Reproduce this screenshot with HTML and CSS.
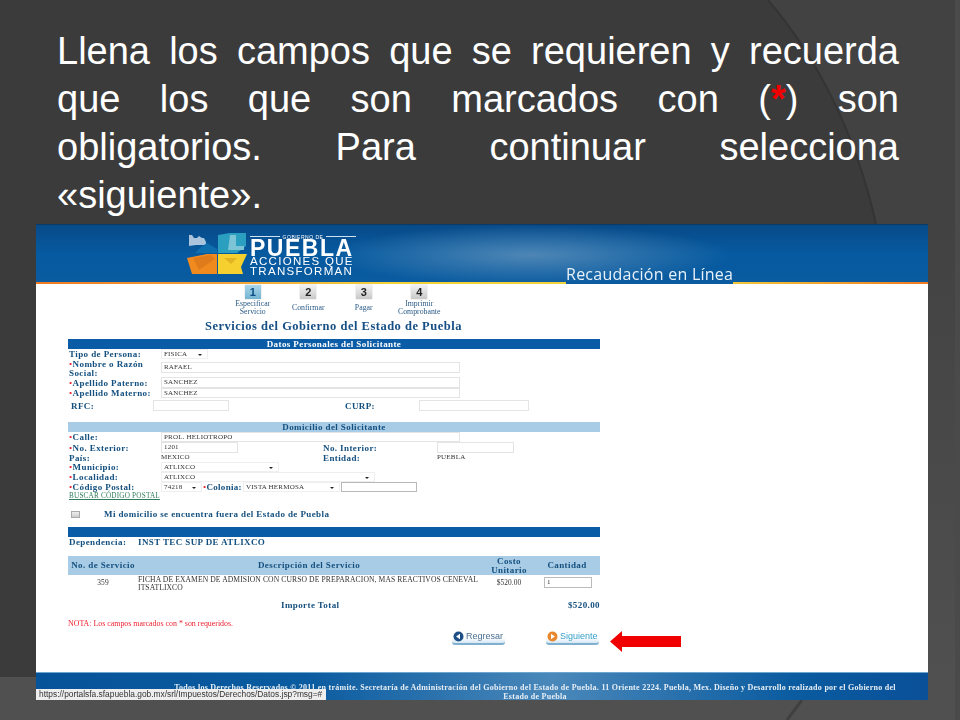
FILE: index.html
```html
<!DOCTYPE html>
<html lang="es">
<head>
<meta charset="utf-8">
<title>Servicios del Gobierno del Estado de Puebla</title>
<link rel="stylesheet" href="styles.css">
</head>
<body>
<div class="slide">
  <svg class="slide-bg" width="960" height="720" viewBox="0 0 960 720" aria-hidden="true">
    <defs>
      <linearGradient id="side" x1="0" y1="0" x2="0" y2="1">
        <stop offset="0" stop-color="#424242"/>
        <stop offset="1" stop-color="#505050"/>
      </linearGradient>
    </defs>
    <path d="M768 0C815 55 855 130 876 224L960 224V0Z" fill="#424242"/>
    <path d="M768 0C815 55 855 130 876 224" fill="none" stroke="#343434" stroke-width="2"/>
    <rect x="876" y="224" width="84" height="453" fill="url(#side)"/>
    <rect x="955" width="5" height="720" fill="#4a4a4a"/>
    <path d="M802 700L787 720" stroke="#404040" stroke-width="3" fill="none"/>
  </svg>
  <h1 class="title">
    <span class="line">Llena los campos que se requieren y recuerda</span>
    <span class="line">que los que son marcados con (<span class="star">*</span>) son</span>
    <span class="line">obligatorios. Para continuar selecciona</span>
    <span class="line line-last">«siguiente».</span>
  </h1>
  <div class="shot">
    <header class="banner">
      <div class="logo">
        <svg class="logo-mark" width="60" height="42" viewBox="0 0 60 42" aria-hidden="true">
          <path d="M2 2H5L7 5H10L12 3L15 5H17L19 9V12H9L2 13Z" fill="#a9c4dc"/>
          <path d="M0 25L20 21H30V41H5Z" fill="#f08a1e"/>
          <path d="M31 21H60L54 34L56 41H31Z" fill="#f6d02e"/>
          <path d="M6 25L24 22L28 26L12 37Z" fill="#d2701a" opacity=".55"/>
          <path d="M37 25H50L44 31Z" fill="#d9a820" opacity=".7"/>
          <path d="M20 10L30 16V20H8L14 14Z" fill="#0f6fae"/>
          <path d="M31 2L43 0H59V13L50 20H31Z" fill="#2a9fc0"/>
          <path d="M43 2H49V13H57V17H41Z" fill="#7cc4d6"/>
        </svg>
        <div class="logo-text">
          <div class="logo-top">GOBIERNO DE</div>
          <div class="logo-name">PUEBLA</div>
          <div class="logo-sub">ACCIONES QUE</div>
          <div class="logo-sub">TRANSFORMAN</div>
        </div>
      </div>
      <div class="banner-tag">Recaudación en Línea</div>
    </header>
    <div class="rule"></div>

    <div class="steps">
      <div class="step"><span class="num num-on">1</span><span class="step-label">Especificar<br>Servicio</span></div>
      <div class="step"><span class="num">2</span><span class="step-label step-mid">Confirmar</span></div>
      <div class="step"><span class="num">3</span><span class="step-label step-mid">Pagar</span></div>
      <div class="step"><span class="num">4</span><span class="step-label">Imprimir<br>Comprobante</span></div>
    </div>

    <h2 class="page-title">Servicios del Gobierno del Estado de Puebla</h2>

    <main class="form">
      <div class="bar bar-dark">Datos Personales del Solicitante</div>
      <div class="row h10"><label class="lab"><b>Tipo de Persona:</b></label><span class="sel w47">FISICA</span></div>
      <div class="row h17 mt1"><label class="lab lab-two"><i>•</i><b>Nombre o Razón Social:</b></label><span class="inp w299 inp-top">RAFAEL</span></div>
      <div class="row h11"><label class="lab"><i>•</i><b>Apellido Paterno:</b></label><span class="inp w299">SANCHEZ</span></div>
      <div class="row h10"><label class="lab"><i>•</i><b>Apellido Materno:</b></label><span class="inp w299">SANCHEZ</span></div>
      <div class="row h11 mt2">
        <label class="lab-rfc"><b>RFC:</b></label><span class="inp w76"></span>
        <label class="lab-curp"><b>CURP:</b></label><span class="inp w110"></span>
      </div>
      <div class="bar bar-light mt11">Domicilio del Solicitante</div>
      <div class="row h10"><label class="lab"><i>•</i><b>Calle:</b></label><span class="inp w299">PROL. HELIOTROPO</span></div>
      <div class="row h11">
        <label class="lab"><i>•</i><b>No. Exterior:</b></label><span class="inp w77">1201</span>
        <label class="lab-mid"><b>No. Interior:</b></label><span class="inp w77"></span>
      </div>
      <div class="row h9">
        <label class="lab"><b>País:</b></label><span class="plain w162">MEXICO</span>
        <label class="lab-mid lab-mid-b"><b>Entidad:</b></label><span class="plain">PUEBLA</span>
      </div>
      <div class="row h10"><label class="lab"><i>•</i><b>Municipio:</b></label><span class="sel w118">ATLIXCO</span></div>
      <div class="row h10"><label class="lab"><i>•</i><b>Localidad:</b></label><span class="sel w214">ATLIXCO</span></div>
      <div class="row h10">
        <label class="lab"><i>•</i><b>Código Postal:</b></label><span class="sel w41">74218</span>
        <label class="lab-col"><i>•</i><b>Colonia:</b></label><span class="sel w97">VISTA HERMOSA</span><span class="inp w76 dark"></span>
      </div>
      <a class="search" href="#">BUSCAR CÓDIGO POSTAL</a>
      <div class="outside"><span class="check"></span><b>Mi domicilio se encuentra fuera del Estado de Puebla</b></div>
      <div class="bar bar-dark bar-blank"></div>
      <div class="dep"><b class="dep-l">Dependencia:</b><b>INST TEC SUP DE ATLIXCO</b></div>
      <table class="services">
        <thead>
          <tr><th class="c1">No. de Servicio</th><th class="c2">Descripción del Servicio</th><th class="c3">Costo<br>Unitario</th><th class="c4">Cantidad</th></tr>
        </thead>
        <tbody>
          <tr>
            <td class="c1 num-cell">359</td>
            <td class="c2 desc">FICHA DE EXAMEN DE ADMISION CON CURSO DE PREPARACION, MAS REACTIVOS CENEVAL ITSATLIXCO</td>
            <td class="c3 cost">$520.00</td>
            <td class="c4 qty"><span class="inp-qty">1</span></td>
          </tr>
        </tbody>
      </table>
      <div class="total"><b>Importe Total</b><b>$520.00</b></div>
      <p class="note">NOTA: Los campos marcados con * son requeridos.</p>
      <div class="actions">
        <span class="btn btn-back">
          <svg width="11" height="11" viewBox="0 0 11 11" aria-hidden="true"><circle cx="5.5" cy="5.5" r="5" fill="#1d4f86"/><path d="M7 2.8V8.2L3 5.5Z" fill="#fff"/></svg>Regresar</span>
        <span class="btn btn-next">
          <svg width="11" height="11" viewBox="0 0 11 11" aria-hidden="true"><circle cx="5.5" cy="5.5" r="5" fill="#e8862a"/><path d="M4 2.8V8.2L8 5.5Z" fill="#fff"/></svg>Siguiente</span>
      </div>
    </main>

    <footer class="foot">
      <p>Todos los Derechos Reservados © 2011 en trámite. Secretaría de Administración del Gobierno del Estado de Puebla. 11 Oriente 2224. Puebla, Mex. Diseño y Desarrollo realizado por el Gobierno del Estado de Puebla</p>
    </footer>
    <div class="status">https://portalsfa.sfapuebla.gob.mx/srl/Impuestos/Derechos/Datos.jsp?msg=#</div>
    <svg class="arrow" width="72" height="21" viewBox="0 0 72 21" aria-hidden="true"><path d="M0 10.5L12 0V5H71V16H12V21Z" fill="#f00000"/></svg>
  </div>
</div>
</body>
</html>
```
FILE: styles.css
```css
* { box-sizing: border-box; }
html, body { margin: 0; padding: 0; }
body { width: 960px; height: 720px; overflow: hidden; background: #3b3b3b; }

.slide {
  position: relative;
  width: 960px;
  height: 720px;
  overflow: hidden;
  background: linear-gradient(#3b3b3b 0, #3b3b3b 677px, #505050 677px, #505050 720px);
  font-family: "Liberation Sans", Arial, sans-serif;
}
.slide-bg { position: absolute; left: 0; top: 0; }

.title {
  position: relative;
  margin: 0;
  height: 224px;
  padding: 27px 61px 0 57px;
  color: #fff;
  font-weight: 400;
  font-size: 38px;
  line-height: 48px;
}
.line { display: block; text-align: justify; text-align-last: justify; }
.line-last { text-align-last: left; }
.star { color: #f00000; font-weight: 700; }

.shot {
  position: relative;
  width: 892px;
  height: 476px;
  margin-left: 36px;
  background: #fff;
  font-family: "Liberation Serif", "Times New Roman", serif;
  overflow: hidden;
  filter: blur(.3px);
}

.banner {
  position: relative;
  height: 58px;
  display: flex;
  align-items: flex-start;
  padding: 8px 0 0 151px;
  background:
    radial-gradient(ellipse 200px 30px at 494px 30px, #4e86b5 0, rgba(78,134,181,0) 100%),
    linear-gradient(#084a88, #065aa0 50%, #0a5ba0);
  border-top: 1px solid #0b3a68;
}
.logo { display: flex; gap: 3px; color: #fff; font-family: "Liberation Sans", Arial, sans-serif; }
.logo-text { width: 106px; }
.logo-top {
  display: flex;
  align-items: center;
  gap: 3px;
  height: 7px;
  font-size: 5px;
  line-height: 6px;
  letter-spacing: .5px;
  white-space: nowrap;
}
.logo-top::before, .logo-top::after { content: ""; flex: 1; height: 1px; background: #cfe0ee; }
.logo-name { font-size: 23px; line-height: 17px; font-weight: 700; letter-spacing: 1.5px; }
.logo-sub { font-size: 11.5px; line-height: 9.5px; letter-spacing: 1.3px; white-space: nowrap; }
.banner-tag {
  position: absolute;
  left: 530px;
  top: 40px;
  height: 19px;
  border-bottom: 2px solid #0a5ba0;
  color: #e8f1f8;
  font-family: "Open Sans", "Liberation Sans", sans-serif;
  font-size: 16px;
  line-height: 19px;
  letter-spacing: .25px;
  white-space: nowrap;
}
.rule {
  height: 2px;
  background: linear-gradient(90deg, #ee7a22 0, #f0a23a 22%, #f2d23a 40%, #f2d23a 75%, #ee7a22 100%);
}

.steps { display: flex; padding-left: 189px; height: 32px; }
.step { width: 55.5px; display: flex; flex-direction: column; align-items: center; }
.num {
  width: 16px;
  height: 14px;
  margin-top: 1px;
  background: linear-gradient(#f2f2f2, #c9c9c9);
  box-shadow: 0 0 1px #aaa;
  color: #222;
  font: 700 11px/14px "Liberation Sans", sans-serif;
  text-align: center;
}
.num-on { background: linear-gradient(#a9d5e8, #73b4d2); color: #0d4d85; }
.step-label {
  margin-top: 1px;
  color: #2a5a86;
  font-size: 7.8px;
  line-height: 8px;
  text-align: center;
  white-space: nowrap;
}
.step-mid { margin-top: 5px; }

.page-title {
  margin: 3px 0 0;
  padding-left: 169px;
  height: 15px;
  color: #164f85;
  font-size: 12.5px;
  line-height: 15px;
  font-weight: 700;
  letter-spacing: .5px;
  white-space: nowrap;
}

.form { width: 532px; margin-left: 32px; margin-top: 5px; color: #14507f; font-size: 9px; }
.bar {
  height: 10px;
  font-size: 9px;
  line-height: 10px;
  font-weight: 700;
  text-align: center;
  letter-spacing: .4px;
}
.bar-dark { background: #0a5ca6; color: #fff; }
.bar-light { background: #a9cce6; color: #14507f; }
.bar-blank { margin-top: 8px; }

.row { display: flex; align-items: center; white-space: nowrap; }
.h9 { height: 9px; }
.h10 { height: 10px; }
.h11 { height: 11px; }
.h17 { height: 17px; }
.mt1 { margin-top: 1px; }
.mt2 { margin-top: 2px; }
.mt11 { margin-top: 11px; }
.lab { width: 93px; padding-left: 1px; letter-spacing: .42px; flex: none; }
.lab i, .lab-col i { color: #e8202a; font-style: normal; }
.lab-two { white-space: normal; line-height: 9px; }
.lab-rfc { width: 85px; padding-left: 3px; letter-spacing: .4px; }
.lab-curp { width: 74px; margin-left: 116px; letter-spacing: .4px; }
.lab-mid { width: 114px; margin-left: 85px; letter-spacing: .4px; }
.lab-mid-b { margin-left: 0; }
.lab-col { width: 40px; margin-left: 1px; letter-spacing: .3px; }

.inp, .sel, .plain {
  color: #333;
  font-size: 7px;
  letter-spacing: .2px;
  height: 100%;
  flex: none;
}
.inp { border: 1px solid #e4e4e4; line-height: 9px; padding-left: 2px; background: #fff; }
.inp-top { align-self: flex-start; height: 11px; margin-top: 2px; }
.inp.dark { border-color: #b8b8b8; margin-left: 1px; }
.sel { position: relative; border: 1px solid #efefef; line-height: 8px; padding-left: 2px; background: #fff; }
.sel::after {
  content: "";
  position: absolute;
  right: 5px;
  top: 3.5px;
  border: 2.5px solid transparent;
  border-top: 2.5px solid #222;
  border-bottom: 0;
}
.plain { line-height: 9px; }
.w47 { width: 47px; }
.w299 { width: 299px; }
.w76 { width: 76px; }
.w77 { width: 77px; }
.w110 { width: 110px; }
.w118 { width: 118px; }
.w214 { width: 214px; }
.w41 { width: 41px; }
.w97 { width: 97px; }
.w162 { width: 162px; }

.search {
  display: block;
  height: 9px;
  padding-left: 1px;
  color: #2f7d5b;
  font-size: 7.2px;
  line-height: 9px;
  letter-spacing: .2px;
}
.outside {
  display: flex;
  align-items: center;
  height: 10px;
  margin-top: 8px;
  letter-spacing: .4px;
}
.check {
  width: 9px;
  height: 7px;
  margin: 0 24px 0 3px;
  border: 1px solid #aaa;
  background: linear-gradient(#eee, #ccc);
}
.outside b { font-weight: 700; }
.dep { display: flex; height: 10px; padding-left: 1px; line-height: 10px; letter-spacing: .4px; }
.dep-l { width: 69px; }

.services {
  width: 532px;
  margin-top: 9px;
  border-collapse: collapse;
  table-layout: fixed;
}
.services th {
  height: 19px;
  padding: 0;
  background: #a9cce6;
  font-size: 9px;
  line-height: 9px;
  letter-spacing: .4px;
  color: #14507f;
}
.services th.c4 { padding-right: 4px; }
.services td { padding: 0; color: #333; font-size: 7.4px; vertical-align: top; letter-spacing: .1px; }
.c1 { width: 70px; }
.c2 { width: 342px; }
.c3 { width: 58px; }
.c4 { width: 62px; }
.services .num-cell { text-align: center; padding-top: 3px; }
.services .desc { line-height: 7.5px; padding-top: 1px; font-size: 7.6px; }
.services .cost { text-align: center; padding-top: 3px; }
.services .qty { padding: 2px 0 0 6px; }
.inp-qty {
  display: block;
  width: 48px;
  height: 11px;
  border: 1px solid #bbb;
  padding-left: 2px;
  font-size: 7px;
  line-height: 9px;
}
.total {
  display: flex;
  justify-content: space-between;
  height: 10px;
  margin-top: 9px;
  padding-left: 213px;
  line-height: 10px;
  letter-spacing: .4px;
}
.note { margin: 9px 0 0; height: 9px; color: #ee2030; font-size: 7.9px; line-height: 9px; }
.actions { display: flex; padding-left: 384px; gap: 41px; margin-top: 2px; }
.btn {
  display: flex;
  align-items: center;
  gap: 2px;
  width: 53px;
  height: 15px;
  padding-left: 1px;
  border-bottom: 2px solid #7fb0d0;
  border-radius: 3px;
  background: linear-gradient(#fff 60%, #d5e6f2);
  font: 9px/11px "Liberation Sans", sans-serif;
}
.btn-back { color: #4a6f90; }
.btn-next { color: #37a0c8; }

.foot {
  position: absolute;
  left: 0;
  right: 0;
  bottom: 0;
  height: 28px;
  border-top: 1px solid #6fa6d0;
  padding: 11px 23px 0 129px;
  background: linear-gradient(90deg, #075399 0, #0a5ba0 30%, #4a88ba 58%, #0a5ba0 85%, #0a5099 100%);
}
.foot p {
  margin: 0;
  color: #e6eef5;
  font-size: 8px;
  font-weight: 700;
  line-height: 8.5px;
  text-align: center;
  letter-spacing: .27px;
}
.status {
  position: absolute;
  left: 0;
  bottom: 0;
  width: 290px;
  height: 11px;
  padding-left: 3px;
  background: #eeeeee;
  color: #333;
  font: 8.4px/11px "Liberation Sans", sans-serif;
  white-space: nowrap;
}
.arrow { position: absolute; left: 574px; top: 407px; }
```
